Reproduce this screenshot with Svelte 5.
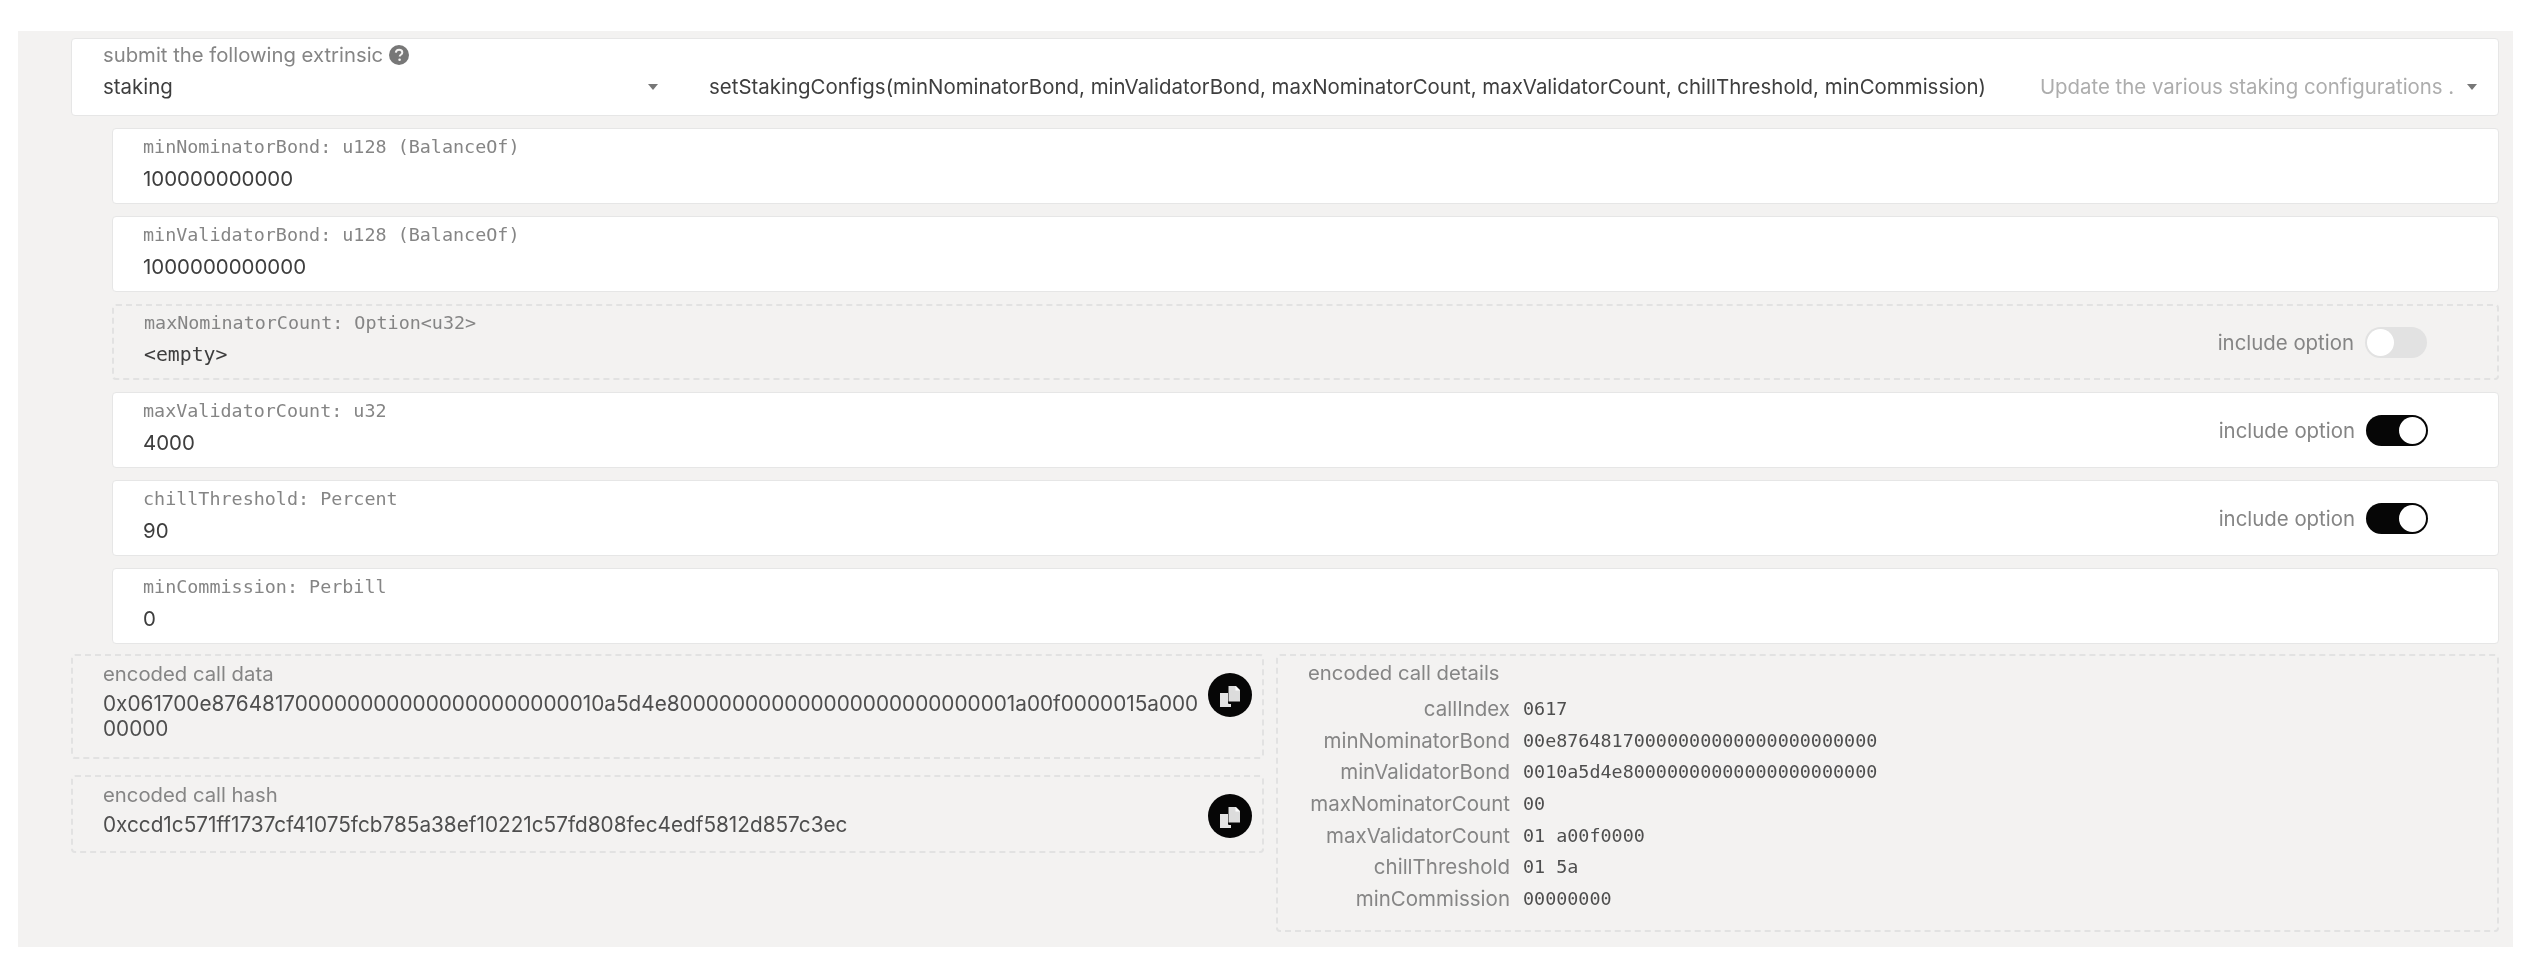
<script>
  const params = [
    { label: 'minNominatorBond: u128 (BalanceOf)', value: '100000000000' },
    { label: 'minValidatorBond: u128 (BalanceOf)', value: '1000000000000' },
    { label: 'maxNominatorCount: Option<u32>', value: '<empty>', empty: true, toggle: 'off' },
    { label: 'maxValidatorCount: u32', value: '4000', toggle: 'on' },
    { label: 'chillThreshold: Percent', value: '90', toggle: 'on' },
    { label: 'minCommission: Perbill', value: '0' }
  ];

  const details = [
    ['callIndex', '0617'],
    ['minNominatorBond', '00e87648170000000000000000000000'],
    ['minValidatorBond', '0010a5d4e80000000000000000000000'],
    ['maxNominatorCount', '00'],
    ['maxValidatorCount', '01 a00f0000'],
    ['chillThreshold', '01 5a'],
    ['minCommission', '00000000']
  ];

  const encoded = [
    {
      label: 'encoded call data',
      value: '0x061700e8764817000000000000000000000010a5d4e800000000000000000000000001a00f0000015a00000000'
    },
    {
      label: 'encoded call hash',
      value: '0xccd1c571ff1737cf41075fcb785a38ef10221c57fd808fec4edf5812d857c3ec'
    }
  ];
</script>

<main class="panel">
  <section class="extrinsic">
    <div class="section-col">
      <div class="label">submit the following extrinsic
        <svg class="help" viewBox="0 0 20 20" aria-hidden="true">
          <circle cx="10" cy="10" r="10" fill="#777" />
          <path d="M6.8 7.6c.2-1.900 1.500-2.900 3.300-2.900 1.900 0 3.200 1.100 3.200 2.700 0 1.200-.7 1.800-1.500 2.400-.8.6-1.100.9-1.100 1.800" fill="none" stroke="#f3f2f1" stroke-width="2" />
          <circle cx="10.600" cy="14.800" r="1.300" fill="#f3f2f1" />
        </svg>
      </div>
      <div class="value with-caret">staking<i class="caret"></i></div>
    </div>
    <div class="method-col">
      <span class="value">setStakingConfigs(minNominatorBond, minValidatorBond, maxNominatorCount, maxValidatorCount, chillThreshold, minCommission)</span>
      <span class="hint">Update the various staking configurations .</span>
      <i class="caret"></i>
    </div>
  </section>

  <section class="params">
    {#each params as p}
      <div class="param" class:empty={p.empty}>
        <div class="param-text">
          <div class="label mono">{p.label}</div>
          <div class="value" class:mono={p.empty}>{p.value}</div>
        </div>
        {#if p.toggle}
          <div class="include">
            <span>include option</span>
            <span class="toggle {p.toggle}"><b></b></span>
          </div>
        {/if}
      </div>
    {/each}
  </section>

  <section class="encoded">
    <div class="encoded-left">
      {#each encoded as e}
        <div class="box">
          <div class="label">{e.label}</div>
          <div class="value hex">{e.value}</div>
          <button class="copy" aria-label="copy">
            <svg viewBox="0 0 44 44" width="44" height="44" aria-hidden="true">
              <path d="M12 20h8v9.500c0 1 .6 1.500 1.500 1.500H23v3H12z" fill="#e4e4e4" />
              <path d="M20.500 13h7.500l4 4v11.500h-11.500z" fill="#dcdcdc" />
              <path d="M27.500 13l4.500 4.500h-4.500z" fill="#fff" />
            </svg>
          </button>
        </div>
      {/each}
    </div>
    <div class="box details">
      <div class="label">encoded call details</div>
      <div class="rows">
        {#each details as [name, hex]}
          <div class="row">
            <span class="name">{name}</span>
            <span class="hex-val">{hex}</span>
          </div>
        {/each}
      </div>
    </div>
  </section>
</main>

<style>
  :global(body) {
    background: #fff;
  }

  .panel {
    box-sizing: border-box;
    width: 2495px;
    height: 916px;
    margin: 31px 0 27px 18px;
    padding: 7px 14px 0 53px;
    background: #f3f2f1;
    font-family: Inter, "Liberation Sans", sans-serif;
    color: #4e4e4e;
    /* the source shot is soft, keep edges from looking too crisp */
    filter: blur(0.5px);
  }

  .label {
    font-size: 20.300px;
    line-height: 24px;
    color: #858585;
  }

  .label.mono {
    font-family: "DejaVu Sans Mono", monospace;
    font-size: 18.400px;
  }

  .value {
    font-size: 20.450px;
    line-height: 25px;
    color: #3e3e3e;
  }

  .extrinsic {
    box-sizing: border-box;
    height: 78px;
    display: flex;
    padding: 4px 16px 0 31px;
    background: #fff;
    border: 1px solid #e6e6e6;
    border-radius: 4px;
  }

  .section-col {
    width: 606px;
    flex: none;
  }

  .section-col .label {
    display: flex;
    align-items: center;
    gap: 6px;
  }

  .help {
    width: 20px;
    height: 20px;
  }

  .with-caret {
    display: flex;
    justify-content: space-between;
    align-items: center;
    margin-top: 7px;
    padding-right: 51px;
  }

  .caret {
    flex: none;
    width: 0;
    height: 0;
    border: 5px solid transparent;
    border-top: 6px solid #777;
    border-bottom: 0;
  }

  .method-col {
    flex: 1;
    display: flex;
    align-items: center;
    height: 25px;
    margin-top: 31px;
    white-space: nowrap;
  }

  .hint {
    margin-left: 54px;
    margin-right: 13px;
    font-size: 20.400px;
    color: #adadad;
  }

  .params {
    display: flex;
    flex-direction: column;
    gap: 12px;
    margin: 12px 0 0 41px;
  }

  .param {
    box-sizing: border-box;
    height: 76px;
    display: flex;
    justify-content: space-between;
    align-items: center;
    padding: 0 70px 0 30px;
    background: #fff;
    border: 1px solid #e6e6e6;
    border-radius: 4px;
  }

  .param.empty {
    background: transparent;
    border: 2px dashed #e2e2e2;
  }

  .param-text {
    padding-bottom: 7px;
  }

  .param .label {
    margin-bottom: 7px;
  }

  .value.mono {
    font-family: "DejaVu Sans Mono", monospace;
    font-size: 19.800px;
  }

  .include {
    display: flex;
    align-items: center;
    gap: 11px;
    font-size: 20.400px;
    color: #858585;
  }

  .toggle {
    box-sizing: border-box;
    width: 62px;
    height: 31px;
    display: flex;
    align-items: center;
    padding: 2px;
    border-radius: 16px;
  }

  .toggle b {
    width: 27px;
    height: 27px;
    background: #fff;
    border-radius: 50%;
  }

  .toggle.on {
    justify-content: flex-end;
    background: #060606;
  }

  .toggle.off {
    background: #e2e2e2;
  }

  .encoded {
    display: flex;
    gap: 12px;
    margin-top: 10px;
  }

  .encoded-left {
    width: 1193px;
    flex: none;
    display: flex;
    flex-direction: column;
    gap: 16px;
  }

  .box {
    box-sizing: border-box;
    position: relative;
    padding: 6px 30px 0;
    border: 2px dashed #e2e2e2;
    border-radius: 4px;
  }

  .encoded-left .box:first-child {
    height: 105px;
  }

  .encoded-left .box:last-child {
    height: 78px;
  }

  .hex {
    margin-top: 5px;
    padding-right: 26px;
    font-size: 20.750px;
    word-break: break-all;
    color: #4e4e4e;
  }

  .copy {
    position: absolute;
    top: 17px;
    right: 10px;
    width: 44px;
    height: 44px;
    padding: 0;
    background: #060606;
    border: 0;
    border-radius: 50%;
  }

  .copy svg {
    display: block;
  }

  .details {
    flex: 1;
    height: 278px;
    padding-top: 5px;
  }

  .rows {
    margin-top: 8px;
  }

  .row {
    display: flex;
    align-items: center;
    height: 31.600px;
  }

  .name {
    width: 202px;
    flex: none;
    text-align: right;
    font-size: 20.500px;
    color: #858585;
  }

  .hex-val {
    margin-left: 13px;
    font-family: "DejaVu Sans Mono", monospace;
    font-size: 18.400px;
    color: #4e4e4e;
  }
</style>
